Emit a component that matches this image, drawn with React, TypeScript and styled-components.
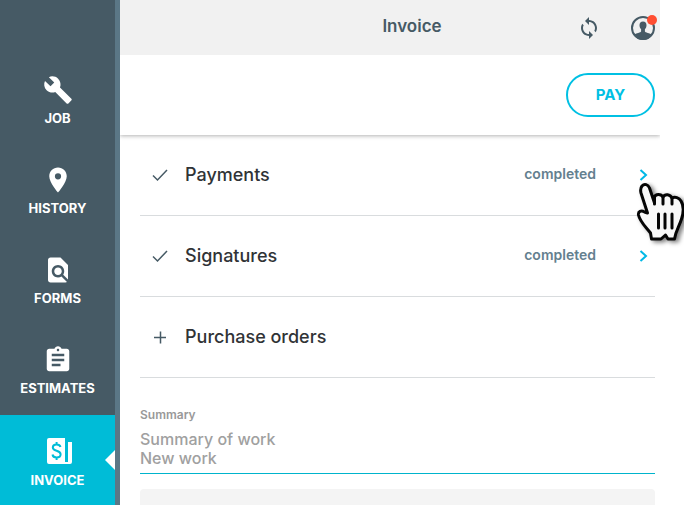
import React from "react";
import styled, { createGlobalStyle, css } from "styled-components";
import { MdBuild, MdPlace, MdFindInPage, MdAssignment, MdSync } from "react-icons/md";

const GlobalStyle = createGlobalStyle`
  * { box-sizing: border-box; }
  html, body, #root { height: 100%; }
  body {
    margin: 0;
    background: #ffffff;
    color: #333333;
    font-family: Inter, "Noto Sans", sans-serif;
  }
  button, textarea { font-family: inherit; }
`;

const Page = styled.div`
  display: flex;
  min-height: 100vh;
  padding-right: 24px;
`;

const Sidebar = styled.nav`
  flex: 0 0 120px;
  display: flex;
  flex-direction: column;
  padding-top: 55px;
  background: #465a65;
  border-right: 5px solid #5b7786;
`;

const NavItem = styled.a<{ $active?: boolean }>`
  position: relative;
  display: flex;
  flex: 0 0 90px;
  flex-direction: column;
  align-items: center;
  gap: 4px;
  padding-top: 20px;
  color: #ffffff;
  font-size: 13px;
  font-weight: 700;
  line-height: 18px;
  text-decoration: none;
  text-transform: uppercase;

  svg { display: block; }

  ${({ $active }) =>
    $active &&
    css`
      padding-top: 22px;
      background: #00bcd7;

      &::after {
        content: "";
        position: absolute;
        right: 0;
        top: 50%;
        margin-top: -10px;
        border: 10px solid transparent;
        border-left-width: 0;
        border-right-color: #ffffff;
      }
    `}
`;

const Main = styled.main`
  display: flex;
  flex: 1;
  flex-direction: column;
  min-width: 0;
`;

const Header = styled.header`
  display: grid;
  grid-template-columns: 1fr auto 1fr;
  align-items: center;
  height: 55px;
  padding: 0 4px 0 48px;
  background: #f1f1f1;
`;

const Title = styled.h1`
  grid-column: 2;
  margin: 0 0 4px;
  color: #465a65;
  font-size: 17px;
  font-weight: 600;
  line-height: 24px;
`;

const HeaderActions = styled.div`
  display: flex;
  justify-content: flex-end;
  gap: 29px;
`;

const IconButton = styled.button`
  display: flex;
  align-items: center;
  justify-content: center;
  padding: 0;
  border: 0;
  background: none;
  color: #465a65;
  cursor: pointer;
`;

const ActionBar = styled.div`
  display: flex;
  align-items: center;
  justify-content: flex-end;
  height: 80px;
  padding-right: 5px;
  box-shadow: 0 1px 4px rgba(0, 0, 0, 0.3);
  clip-path: inset(0 0 -8px 0);
`;

const PayButton = styled.button`
  width: 89px;
  height: 44px;
  padding: 0 0 2px;
  border: 2px solid #00c0e3;
  border-radius: 22px;
  background: #ffffff;
  color: #00c0e3;
  font-size: 15px;
  font-weight: 700;
  cursor: pointer;
`;

const Content = styled.div`
  display: flex;
  flex: 1;
  flex-direction: column;
  padding: 0 5px 0 20px;
`;

const Row = styled.button`
  display: flex;
  align-items: center;
  width: 100%;
  height: 81px;
  padding: 0 7px 0 10px;
  border: 0;
  border-bottom: 1px solid #d9dcde;
  background: none;
  color: #465a65;
  text-align: left;
  cursor: pointer;
`;

const RowLabel = styled.span`
  flex: 1;
  padding-left: 15px;
  color: #303336;
  font-size: 18px;
  font-weight: 500;
  line-height: 24px;
`;

const RowStatus = styled.span`
  margin-right: 43px;
  padding-bottom: 2px;
  color: #64808f;
  font-size: 14px;
  font-weight: 600;
  line-height: 20px;
`;

const Field = styled.div`
  display: flex;
  flex-direction: column;
  padding-top: 28px;
`;

const FieldLabel = styled.label`
  color: #999999;
  font-size: 12px;
  font-weight: 600;
  line-height: 18px;
`;

const FieldInput = styled.textarea`
  display: block;
  height: 50px;
  margin: 0;
  padding: 6px 0 0;
  border: 0;
  border-bottom: 1px solid #00b4cc;
  border-radius: 0;
  outline: none;
  overflow: hidden;
  resize: none;
  background: none;
  color: #a0a0a0;
  font-size: 16px;
  font-weight: 500;
  line-height: 19px;
`;

const Panel = styled.section`
  flex: 1;
  min-height: 16px;
  margin-top: 15px;
  border-radius: 4px 4px 0 0;
  background: #f4f4f4;
`;

const Pointer = styled.div`
  position: absolute;
  top: 182px;
  right: 0;
  overflow: hidden;
  pointer-events: none;

  svg {
    display: block;
    filter: drop-shadow(3px 2px 2px rgba(0, 0, 0, 0.5));
  }
`;

const InvoiceIcon = () => (
  <svg width="30" height="30" viewBox="0 0 30 30" aria-hidden="true">
    <path
      fill="#fff"
      d="M6 1H22V27H6a2 2 0 0 1-2-2V3a2 2 0 0 1 2-2ZM25 5H29V25a2 2 0 0 1-2 2H22V25H25Z"
    />
    <path
      d="M17.500 10C17 8.200 15.500 7.500 13.500 7.500 11.300 7.500 9.800 8.700 9.800 10.500 9.800 14.800 17.600 12.700 17.600 17.300 17.600 19.300 15.800 20.500 13.600 20.500 11.300 20.500 9.800 19.400 9.500 17.500M13.600 5V7.500M13.600 20.500V23"
      fill="none"
      stroke="#00bcd7"
      strokeWidth="2"
    />
  </svg>
);

const ProfileIcon = () => (
  <svg width="26" height="26" viewBox="0 0 26 26" overflow="visible" aria-hidden="true">
    <circle cx="13" cy="13" r="11" fill="none" stroke="#465a65" strokeWidth="2" />
    <path
      fill="#465a65"
      d="M13 6.500c-2.300 0-3.500 1.500-3.500 3.800 0 2 .8 3.200 1.600 4v2.200c0 1-5.100 1.500-7.300 3.500C5.700 23 9 25 13 25s7.300-2 9.200-5c-2.200-2-7.300-2.500-7.300-3.500v-2.200c.8-.8 1.600-2 1.600-4 0-2.300-1.200-3.800-3.500-3.800Z"
    />
    <circle cx="22" cy="5" r="5" fill="#ff4e32" />
  </svg>
);

const CheckIcon = () => (
  <svg width="20" height="20" viewBox="0 0 20 20" aria-hidden="true">
    <path d="M3 10.500 7.500 15 17 5" fill="none" stroke="currentColor" strokeWidth="1.500" />
  </svg>
);

const PlusIcon = () => (
  <svg width="20" height="20" viewBox="0 0 20 20" aria-hidden="true">
    <path d="M4 10.500H16M10.500 4.500V16.500" fill="none" stroke="currentColor" strokeWidth="1.500" />
  </svg>
);

const ChevronIcon = () => (
  <svg width="9" height="12" viewBox="0 0 9 12" aria-hidden="true">
    <path d="M1.500 1 7 6 1.500 11" fill="none" stroke="#00b8e6" strokeWidth="2" />
  </svg>
);

const HandIcon = () => (
  <svg width="48" height="66" viewBox="0 0 48 66" aria-hidden="true">
    <path
      d="M6 4C8.500 1.200 12 2.500 13.500 6L18.500 21V15C19.500 11.500 25 11.500 27 15 29 11.500 34 12 36 16 39 14.500 43 15.500 45 19 48 24 47.500 31 45.500 37 43 45 40 48 38.500 57H32L29.500 53 25 57H15.500L14.500 51C10 45 4 40 2.500 33 2 29.500 5 28 8.500 30L11.500 31 5 11C4.200 8 4.500 6 6 4Z"
      fill="#f8f8f8"
      stroke="#050505"
      strokeWidth="3"
      strokeLinejoin="round"
    />
    <path
      d="M18.500 15V22M27 15V22M36 16V22M22.500 32V46M29 32V46M36 32V46"
      fill="none"
      stroke="#050505"
      strokeWidth="3"
      strokeLinecap="round"
    />
  </svg>
);

const navItems = [
  { label: "Job", icon: <MdBuild size={30} /> },
  { label: "History", icon: <MdPlace size={30} /> },
  { label: "Forms", icon: <MdFindInPage size={30} /> },
  { label: "Estimates", icon: <MdAssignment size={30} /> },
  { label: "Invoice", icon: <InvoiceIcon />, active: true },
];

const rows = [
  { label: "Payments", completed: true },
  { label: "Signatures", completed: true },
  { label: "Purchase orders", completed: false },
];

export default function App() {
  return (
    <>
      <GlobalStyle />
      <Page>
        <Sidebar>
          {navItems.map((item) => (
            <NavItem key={item.label} href="#" $active={item.active}>
              {item.icon}
              {item.label}
            </NavItem>
          ))}
        </Sidebar>
        <Main>
          <Header>
            <Title>Invoice</Title>
            <HeaderActions>
              <IconButton aria-label="Sync">
                <MdSync size={24} />
              </IconButton>
              <IconButton aria-label="Profile">
                <ProfileIcon />
              </IconButton>
            </HeaderActions>
          </Header>
          <ActionBar>
            <PayButton>PAY</PayButton>
          </ActionBar>
          <Content>
            {rows.map((row) => (
              <Row key={row.label}>
                {row.completed ? <CheckIcon /> : <PlusIcon />}
                <RowLabel>{row.label}</RowLabel>
                {row.completed && (
                  <>
                    <RowStatus>completed</RowStatus>
                    <ChevronIcon />
                  </>
                )}
              </Row>
            ))}
            <Field>
              <FieldLabel htmlFor="summary">Summary</FieldLabel>
              <FieldInput id="summary" defaultValue={"Summary of work\nNew work"} />
            </Field>
            <Panel />
          </Content>
        </Main>
      </Page>
      <Pointer>
        <HandIcon />
      </Pointer>
    </>
  );
}
